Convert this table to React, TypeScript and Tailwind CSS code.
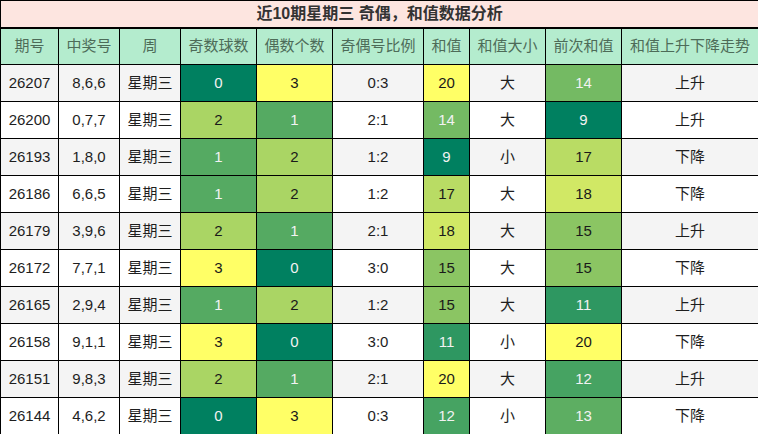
import React from "react";

type Row = {
  issue: string;
  nums: string;
  odd: number;
  even: number;
  ratio: string;
  sum: number;
  size: string;
  prev: number;
  trend: string;
};

const rows: Row[] = [
  { issue: "26207", nums: "8,6,6", odd: 0, even: 3, ratio: "0:3", sum: 20, size: "大", prev: 14, trend: "上升" },
  { issue: "26200", nums: "0,7,7", odd: 2, even: 1, ratio: "2:1", sum: 14, size: "大", prev: 9, trend: "上升" },
  { issue: "26193", nums: "1,8,0", odd: 1, even: 2, ratio: "1:2", sum: 9, size: "小", prev: 17, trend: "下降" },
  { issue: "26186", nums: "6,6,5", odd: 1, even: 2, ratio: "1:2", sum: 17, size: "大", prev: 18, trend: "下降" },
  { issue: "26179", nums: "3,9,6", odd: 2, even: 1, ratio: "2:1", sum: 18, size: "大", prev: 15, trend: "上升" },
  { issue: "26172", nums: "7,7,1", odd: 3, even: 0, ratio: "3:0", sum: 15, size: "大", prev: 15, trend: "下降" },
  { issue: "26165", nums: "2,9,4", odd: 1, even: 2, ratio: "1:2", sum: 15, size: "大", prev: 11, trend: "上升" },
  { issue: "26158", nums: "9,1,1", odd: 3, even: 0, ratio: "3:0", sum: 11, size: "小", prev: 20, trend: "下降" },
  { issue: "26151", nums: "9,8,3", odd: 2, even: 1, ratio: "2:1", sum: 20, size: "大", prev: 12, trend: "上升" },
  { issue: "26144", nums: "4,6,2", odd: 0, even: 3, ratio: "0:3", sum: 12, size: "小", prev: 13, trend: "下降" },
];

const headers = ["期号", "中奖号", "周", "奇数球数", "偶数个数", "奇偶号比例", "和值", "和值大小", "前次和值", "和值上升下降走势"];
const widths = [58, 61, 61, 76, 76, 91, 46, 76, 76, 137];

// teal -> yellow scale, like the spreadsheet's conditional format
function scale(v: number, min: number, max: number) {
  const t = (v - min) / (max - min);
  const a = [0x00, 0x80, 0x60];
  const b = [0xff, 0xff, 0x66];
  const c = a.map((x, i) => Math.round(x + (b[i] - x) * t));
  return {
    backgroundColor: `rgb(${c[0]},${c[1]},${c[2]})`,
    color: t < 0.5 ? "#f2f2f2" : "#1a1a1a",
  };
}

export default function App() {
  return (
    <div className="w-[758px] h-[434px] bg-white" style={{ fontFamily: '"Liberation Sans", "Noto Sans CJK SC", sans-serif' }}>
      <table className="w-[758px] table-fixed border-collapse text-[15px] text-[#1e1e1e]">
        <colgroup>
          {widths.map((w, i) => (
            <col key={i} style={{ width: w }} />
          ))}
        </colgroup>
        <thead>
          <tr className="h-[27px]">
            <th colSpan={10} className="border border-black border-b-2 bg-[#fde5e0] p-0 text-center text-[16px] font-bold leading-none text-[#333]">
              近10期星期三 奇偶，和值数据分析
            </th>
          </tr>
          <tr className="h-[37px]">
            {headers.map((h) => (
              <th key={h} className="border border-black bg-[#b4ecce] p-0 text-center font-normal text-[#4d6b58]">
                {h}
              </th>
            ))}
          </tr>
        </thead>
        <tbody>
          {rows.map((r, i) => (
            <tr key={r.issue} className={i % 2 === 0 ? "h-[37px] bg-[#f4f4f4]" : "h-[37px] bg-white"}>
              <td className="border border-black p-0 text-center">{r.issue}</td>
              <td className="border border-black p-0 text-center">{r.nums}</td>
              <td className="border border-black p-0 text-center">星期三</td>
              <td className="border border-black p-0 text-center" style={scale(r.odd, 0, 3)}>{r.odd}</td>
              <td className="border border-black p-0 text-center" style={scale(r.even, 0, 3)}>{r.even}</td>
              <td className="border border-black p-0 text-center">{r.ratio}</td>
              <td className="border border-black p-0 text-center" style={scale(r.sum, 9, 20)}>{r.sum}</td>
              <td className="border border-black p-0 text-center">{r.size}</td>
              <td className="border border-black p-0 text-center" style={scale(r.prev, 9, 20)}>{r.prev}</td>
              <td className="border border-black p-0 text-center">{r.trend}</td>
            </tr>
          ))}
        </tbody>
      </table>
    </div>
  );
}
